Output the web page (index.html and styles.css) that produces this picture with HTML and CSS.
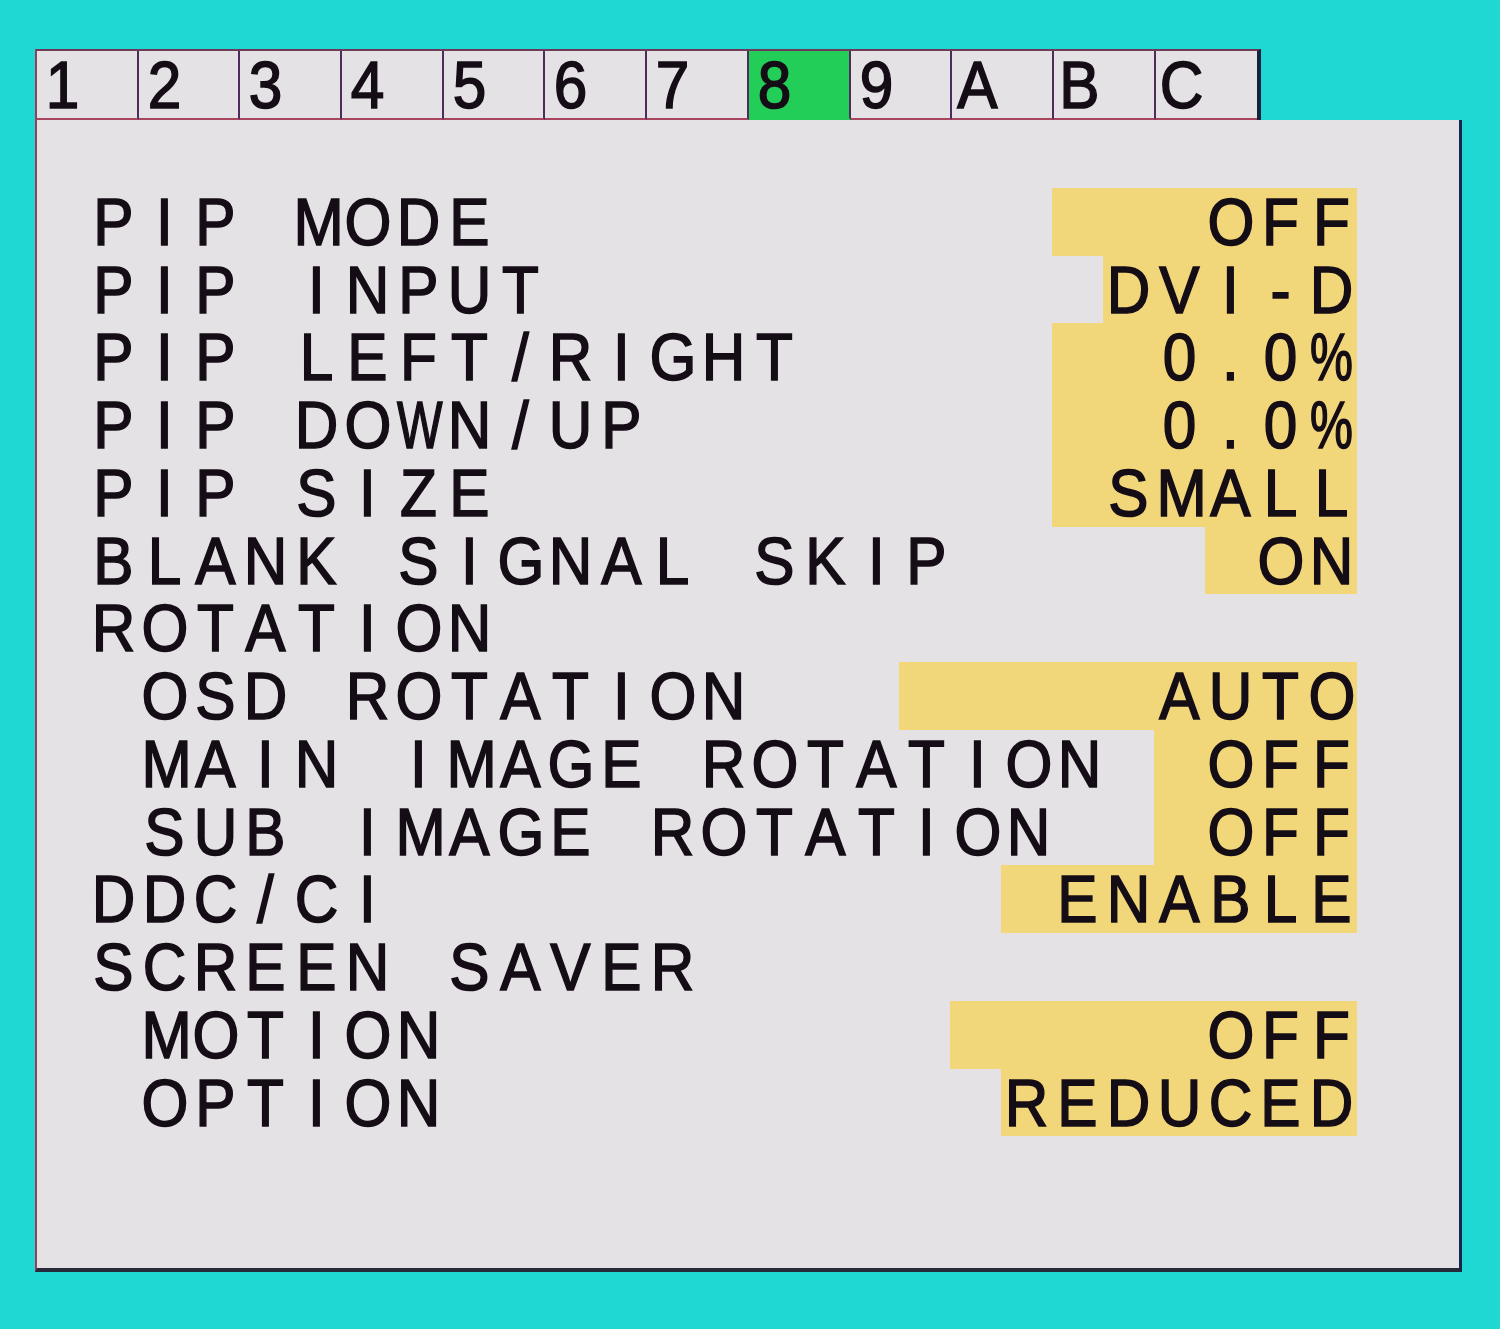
FILE: index.html
```html
<!DOCTYPE html>
<html lang="en">
<head>
    <meta charset="UTF-8">
    <meta name="viewport" content="width=device-width, initial-scale=1.0">
    <title>OSD Menu 8</title>
    <link rel="stylesheet" href="styles.css">
</head>
<body>
    <div class="osd">
        <div class="tabs">
            <div class="tab"><span class="txt">1</span></div>
            <div class="tab"><span class="txt">2</span></div>
            <div class="tab"><span class="txt">3</span></div>
            <div class="tab"><span class="txt">4</span></div>
            <div class="tab"><span class="txt">5</span></div>
            <div class="tab"><span class="txt">6</span></div>
            <div class="tab"><span class="txt">7</span></div>
            <div class="tab active"><span class="txt">8</span></div>
            <div class="tab"><span class="txt">9</span></div>
            <div class="tab"><span class="txt">A</span></div>
            <div class="tab"><span class="txt">B</span></div>
            <div class="tab last"><span class="txt">C</span></div>
        </div>

        <div class="panel">
            <div class="row"><span class="txt label">PIP MODE</span><span class="txt value w6">OFF</span></div>
            <div class="row"><span class="txt label">PIP INPUT</span><span class="txt value w5">DVI-D</span></div>
            <div class="row"><span class="txt label">PIP LEFT/RIGHT</span><span class="txt value w6">0.0%</span></div>
            <div class="row"><span class="txt label">PIP DOWN/UP</span><span class="txt value w6">0.0%</span></div>
            <div class="row"><span class="txt label">PIP SIZE</span><span class="txt value w6">SMALL</span></div>
            <div class="row"><span class="txt label">BLANK SIGNAL SKIP</span><span class="txt value w3">ON</span></div>
            <div class="row"><span class="txt label">ROTATION</span></div>
            <div class="row sub"><span class="txt label">OSD ROTATION</span><span class="txt value w9">AUTO</span></div>
            <div class="row sub"><span class="txt label">MAIN IMAGE ROTATION</span><span class="txt value w4">OFF</span></div>
            <div class="row sub"><span class="txt label">SUB IMAGE ROTATION</span><span class="txt value w4">OFF</span></div>
            <div class="row"><span class="txt label">DDC/CI</span><span class="txt value w7">ENABLE</span></div>
            <div class="row"><span class="txt label">SCREEN SAVER</span></div>
            <div class="row sub"><span class="txt label">MOTION</span><span class="txt value w8">OFF</span></div>
            <div class="row sub"><span class="txt label">OPTION</span><span class="txt value w7">REDUCED</span></div>
        </div>
    </div>

    <script>
        // the OSD draws on a fixed character grid: one cell per character
        document.querySelectorAll(".txt").forEach(function (el) {
            let texto = el.textContent;
            el.textContent = "";
            for (let i = 0; i < texto.length; i++) {
                let cell = document.createElement("span");
                cell.className = "ch";
                if (texto[i] === "W" || texto[i] === "%") cell.className += " narrow";
                cell.textContent = texto[i];
                el.appendChild(cell);
            }
        });
    </script>
</body>
</html>
```

FILE: styles.css
```css
:root {
    --cw: 50.85px;
    --rh: 67.75px;
}

* {
    box-sizing: border-box;
    margin: 0;
    padding: 0;
}

body {
    background-color: #1fd8d3;
    padding: 49px 0 0 35px;
    font-family: "Liberation Sans", Arial, sans-serif;
    font-size: 67px;
    color: #150d16;
}

.osd {
    width: calc(28 * var(--cw) + 3px);
}

.tabs {
    display: flex;
    width: calc(24 * var(--cw) + 6px);
    height: 71px;
    background: #e4e2e4;
    border-top: 2px solid #6e3a58;
    border-left: 2px solid #9a3c5c;
    border-right: 4px solid #16223e;
}

.tab {
    width: calc(2 * var(--cw));
    height: 100%;
    line-height: 67px;
    border-right: 2px solid #4e2c5c;
    border-bottom: 2px solid #a8445e;
}

.tab.last {
    border-right: none;
}

.tab.active {
    background: #22cd58;
    border-bottom-color: #22cd58;
}

.panel {
    width: 100%;
    height: 1152px;
    background: #e4e2e4;
    padding: var(--rh) calc(2 * var(--cw)) 0 var(--cw);
    border-left: 2px solid #9a3c5c;
    border-right: 3px solid #15284a;
    border-bottom: 4px solid #262a3a;
}

.row {
    display: flex;
    height: var(--rh);
    line-height: var(--rh);
}

.row.sub .label {
    margin-left: var(--cw);
}

.value {
    margin-left: auto;
    text-align: right;
    background: #f1d67a;
}

.w3 { width: calc(3 * var(--cw)); }
.w4 { width: calc(4 * var(--cw)); }
.w5 { width: calc(5 * var(--cw)); }
.w6 { width: calc(6 * var(--cw)); }
.w7 { width: calc(7 * var(--cw)); }
.w8 { width: calc(8 * var(--cw)); }
.w9 { width: calc(9 * var(--cw)); }

.txt {
    display: block;
    white-space: pre;
}

.ch {
    display: inline-block;
    width: var(--cw);
    text-align: center;
    transform: scaleX(0.9);
    -webkit-text-stroke: 1.6px #150d16;
}

.ch.narrow {
    transform: translateX(-3px) scaleX(0.72);
}
```
